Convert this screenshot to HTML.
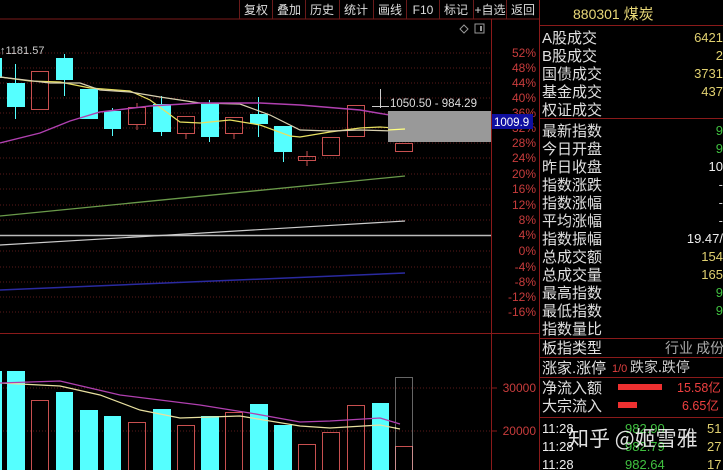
<!DOCTYPE html>
<html><head><meta charset="utf-8"><style>
html,body{margin:0;padding:0;background:#000;width:723px;height:470px;overflow:hidden}
svg{display:block}
text{font-family:"Liberation Sans","Noto Sans CJK SC",sans-serif}
.cn{font-family:"Noto Sans CJK SC","WenQuanYi Zen Hei",sans-serif}
</style></head><body>
<svg width="723" height="470" viewBox="0 0 723 470" xmlns="http://www.w3.org/2000/svg">
<rect width="723" height="470" fill="#000"/>
<line x1="0" y1="19" x2="540" y2="19" stroke="#7a1a1a" stroke-width="1"/>
<g stroke="#6a1a1a">
<line x1="239.5" y1="0" x2="239.5" y2="19"/><line x1="272.5" y1="0" x2="272.5" y2="19"/><line x1="305.5" y1="0" x2="305.5" y2="19"/><line x1="339.5" y1="0" x2="339.5" y2="19"/><line x1="373.5" y1="0" x2="373.5" y2="19"/><line x1="406.5" y1="0" x2="406.5" y2="19"/><line x1="439.5" y1="0" x2="439.5" y2="19"/><line x1="473.5" y1="0" x2="473.5" y2="19"/><line x1="506.5" y1="0" x2="506.5" y2="19"/>
</g>
<g class="cn" fill="#ddd" font-size="12" text-anchor="middle">
<text x="256" y="14">复权</text><text x="289" y="14">叠加</text><text x="322" y="14">历史</text><text x="356" y="14">统计</text><text x="390" y="14">画线</text><text x="423" y="14" font-family="Liberation Sans">F10</text><text x="456" y="14">标记</text><text x="490" y="14">+自选</text><text x="523" y="14">返回</text>
</g>
<path d="M464 25 L468 29 L464 33 L460 29 Z" fill="none" stroke="#999"/>
<rect x="475" y="24" width="9" height="9" fill="none" stroke="#999"/><rect x="480" y="26" width="2" height="5" fill="#999"/>
<line x1="491.5" y1="19" x2="491.5" y2="470" stroke="#8a1a1a"/>
<line x1="539.5" y1="0" x2="539.5" y2="470" stroke="#8a1a1a"/>
<line x1="0" y1="333.5" x2="540" y2="333.5" stroke="#8a1a1a"/>
<g stroke="#5a1a1a" stroke-dasharray="1,2">
<line x1="0" y1="53" x2="491" y2="53"/><line x1="0" y1="68" x2="491" y2="68"/><line x1="0" y1="83" x2="491" y2="83"/><line x1="0" y1="98" x2="491" y2="98"/><line x1="0" y1="113" x2="491" y2="113"/><line x1="0" y1="128" x2="491" y2="128"/><line x1="0" y1="143" x2="491" y2="143"/><line x1="0" y1="158" x2="491" y2="158"/><line x1="0" y1="174" x2="491" y2="174"/><line x1="0" y1="189" x2="491" y2="189"/><line x1="0" y1="205" x2="491" y2="205"/><line x1="0" y1="220" x2="491" y2="220"/><line x1="0" y1="251" x2="491" y2="251"/><line x1="0" y1="267" x2="491" y2="267"/><line x1="0" y1="282" x2="491" y2="282"/><line x1="0" y1="297" x2="491" y2="297"/><line x1="0" y1="312" x2="491" y2="312"/>
<line x1="0" y1="388" x2="491" y2="388"/><line x1="0" y1="431" x2="491" y2="431"/>
</g>
<g fill="#c83c3c" font-size="12" text-anchor="end">
<text x="536" y="57">52%</text><text x="536" y="72">48%</text><text x="536" y="87">44%</text><text x="536" y="102">40%</text><text x="536" y="117">36%</text><text x="536" y="132">32%</text><text x="536" y="147">28%</text><text x="536" y="162">24%</text><text x="536" y="178">20%</text><text x="536" y="193">16%</text><text x="536" y="209">12%</text><text x="536" y="224">8%</text><text x="536" y="239">4%</text><text x="536" y="255">0%</text><text x="536" y="271">-4%</text><text x="536" y="286">-8%</text><text x="536" y="301">-12%</text><text x="536" y="316">-16%</text>
<text x="536" y="392">30000</text><text x="536" y="435">20000</text>
</g>
<g stroke="#8a1a1a"><line x1="492" y1="388" x2="497" y2="388"/><line x1="492" y1="431" x2="497" y2="431"/></g>
<line x1="0" y1="235.5" x2="491" y2="235.5" stroke="#bbb" stroke-width="1.5"/>
<line x1="0" y1="216" x2="405" y2="176" stroke="#6a9a4a" stroke-width="1.3"/>
<line x1="0" y1="245" x2="405" y2="221" stroke="#ccc" stroke-width="1.2"/>
<line x1="0" y1="290" x2="405" y2="273" stroke="#2a2aa0" stroke-width="1.5"/>
<text x="0" y="54" fill="#ccc" font-size="11">↑1181.57</text>
<g fill="#55ffff">
<rect x="0" y="58" width="2" height="20"/>
<rect x="7" y="83" width="18" height="24"/><rect x="15" y="64" width="1" height="55"/>
<rect x="56" y="58" width="17" height="22"/><rect x="64" y="54" width="1" height="42"/>
<rect x="80" y="89" width="18" height="30"/>
<rect x="104" y="111" width="17" height="18"/><rect x="112" y="108" width="1" height="28"/>
<rect x="153" y="104" width="18" height="28"/><rect x="161" y="96" width="1" height="40"/>
<rect x="201" y="104" width="18" height="33"/><rect x="209" y="100" width="1" height="42"/>
<rect x="250" y="114" width="18" height="10"/><rect x="258" y="97" width="1" height="40"/>
<rect x="274" y="126" width="18" height="26"/><rect x="283" y="150" width="1" height="12"/>
</g>
<g fill="none" stroke="#c85050">
<rect x="31.5" y="71.5" width="17" height="38"/>
<rect x="128.5" y="107.5" width="17" height="17"/><line x1="137" y1="103" x2="137" y2="107"/><line x1="137" y1="125" x2="137" y2="130"/>
<rect x="177.5" y="116.5" width="17" height="17"/><line x1="186" y1="134" x2="186" y2="139"/>
<rect x="225.5" y="117.5" width="17" height="16"/><line x1="234" y1="134" x2="234" y2="139"/>
<rect x="298.5" y="156.5" width="17" height="4"/><line x1="307" y1="151" x2="307" y2="156"/><line x1="307" y1="161" x2="307" y2="166"/>
<rect x="322.5" y="137.5" width="17" height="18"/>
<rect x="347.5" y="105.5" width="17" height="31"/>
<rect x="395.5" y="143.5" width="17" height="8"/>
</g>
<g stroke="#ccc"><line x1="372" y1="106.5" x2="389" y2="106.5"/><line x1="380.5" y1="89" x2="380.5" y2="108"/></g>
<polyline fill="none" stroke="#e8e060" stroke-width="1.2" points="0,77 30,81 60,82 90,88 130,91 150,100 180,122 200,123 230,120 260,125 290,136 300,137 330,132 360,128 380,127 395,128"/>
<polyline fill="none" stroke="#d8d0b0" stroke-width="1.2" points="0,77 50,83 80,83 100,90 130,92 160,97 200,103 240,104 270,115 300,130 330,131 360,130 395,131"/>
<polyline fill="none" stroke="#b040b0" stroke-width="1.4" points="0,143 40,133 70,121 100,112 150,106 200,103 260,103 300,105 360,110 395,116"/>
<rect x="388" y="111" width="103" height="31" fill="#999"/>
<line x1="388" y1="130" x2="405" y2="129" stroke="#ffff80" stroke-width="1.2"/>
<text x="390" y="107" fill="#ddd" font-size="11.5">1050.50 - 984.29</text>
<rect x="492" y="114" width="41" height="15" fill="#1010a0"/>
<text x="494" y="126" fill="#fff" font-size="11.5">1009.9</text>
<g fill="#55ffff">
<rect x="0" y="371" width="2" height="99"/><rect x="7" y="371" width="18" height="99"/><rect x="56" y="392" width="17" height="78"/><rect x="80" y="410" width="18" height="60"/><rect x="104" y="416" width="17" height="54"/><rect x="153" y="409" width="18" height="61"/><rect x="201" y="416" width="18" height="54"/><rect x="250" y="404" width="18" height="66"/><rect x="274" y="425" width="18" height="45"/><rect x="372" y="403" width="17" height="67"/>
</g>
<g fill="none" stroke="#c85050">
<rect x="31.5" y="400.5" width="17" height="80"/><rect x="128.5" y="422.5" width="17" height="60"/><rect x="177.5" y="425.5" width="17" height="60"/><rect x="225.5" y="412.5" width="17" height="60"/><rect x="298.5" y="444.5" width="17" height="40"/><rect x="322.5" y="432.5" width="17" height="40"/><rect x="347.5" y="405.5" width="17" height="70"/><rect x="395.5" y="446.5" width="17" height="40"/>
</g>
<rect x="395.5" y="377.5" width="17" height="93" fill="none" stroke="#ccc" stroke-dasharray="1,1"/>
<polyline fill="none" stroke="#e8e0a0" stroke-width="1.2" points="0,383 60,386 100,395 140,410 180,418 240,416 300,426 330,428 380,425 400,429"/>
<polyline fill="none" stroke="#b040b0" stroke-width="1.3" points="0,383 60,381 120,395 200,405 250,413 300,422 330,421 380,418 400,424"/>
<text x="573" y="19" fill="#e8d878" font-size="14">880301 <tspan class="cn" font-size="15">煤炭</tspan></text>
<g stroke="#8a1a1a"><line x1="540" y1="25.5" x2="723" y2="25.5"/><line x1="540" y1="118.5" x2="723" y2="118.5"/><line x1="540" y1="338.5" x2="723" y2="338.5"/><line x1="540" y1="357.5" x2="723" y2="357.5"/><line x1="540" y1="377.5" x2="723" y2="377.5"/><line x1="540" y1="417.5" x2="723" y2="417.5"/></g>
<g class="cn" fill="#e0e0e0" font-size="15">
<text x="542" y="43">A股成交</text><text x="542" y="61">B股成交</text><text x="542" y="79">国债成交</text><text x="542" y="97">基金成交</text><text x="542" y="115">权证成交</text>
<text x="542" y="136">最新指数</text><text x="542" y="154">今日开盘</text><text x="542" y="172">昨日收盘</text><text x="542" y="190">指数涨跌</text><text x="542" y="208">指数涨幅</text><text x="542" y="226">平均涨幅</text><text x="542" y="244">指数振幅</text><text x="542" y="262">总成交额</text><text x="542" y="280">总成交量</text><text x="542" y="298">最高指数</text><text x="542" y="316">最低指数</text><text x="542" y="334">指数量比</text>
<text x="542" y="353">板指类型</text><text x="542" y="373">涨家.涨停</text><text x="542" y="393">净流入额</text><text x="542" y="411">大宗流入</text>
</g>
<g font-size="13" text-anchor="end">
<text x="723" y="42" fill="#e0d070">6421</text><text x="723" y="60" fill="#e0d070">2</text><text x="723" y="78" fill="#e0d070">3731</text><text x="723" y="96" fill="#e0d070">437</text>
<text x="723" y="135" fill="#40c040">9</text><text x="723" y="153" fill="#40c040">9</text><text x="723" y="171" fill="#eee">10</text><text x="723" y="189" fill="#ccc">-</text><text x="723" y="207" fill="#ccc">-</text><text x="723" y="225" fill="#ccc">-</text><text x="723" y="243" fill="#eee">19.47/</text><text x="723" y="261" fill="#e0d070">154</text><text x="723" y="279" fill="#e0d070">165</text><text x="723" y="297" fill="#40c040">9</text><text x="723" y="315" fill="#40c040">9</text>
</g>
<text x="665" y="353" class="cn" fill="#aaa" font-size="14">行业 成份</text>
<text x="612" y="372" fill="#e04040" font-size="11">1/0</text>
<text x="630" y="372" class="cn" fill="#ccc" font-size="14">跌家.跌停</text>
<rect x="618" y="384" width="44" height="6" fill="#ee3030"/><rect x="618" y="402" width="19" height="6" fill="#ee3030"/>
<text x="677" y="392" fill="#ee4040" font-size="12.5">15.58<tspan class="cn">亿</tspan></text>
<text x="682" y="410" fill="#ee4040" font-size="12.5">6.65<tspan class="cn">亿</tspan></text>
<g font-size="13"><text x="542" y="433" fill="#eee">11:28</text><text x="542" y="451" fill="#eee">11:28</text><text x="542" y="469" fill="#eee">11:28</text>
<text x="625" y="433" fill="#40c040">982.90</text><text x="625" y="451" fill="#40c040">982.79</text><text x="625" y="469" fill="#40c040">982.64</text>
<text x="707" y="433" fill="#e0d070">51</text><text x="707" y="451" fill="#e0d070">27</text><text x="707" y="469" fill="#e0d070">17</text></g>
<text x="568" y="446" class="cn" fill="#f4f4f4" font-size="21" opacity="0.92">知乎 @姬雪雅</text>
</svg>
</body></html>
